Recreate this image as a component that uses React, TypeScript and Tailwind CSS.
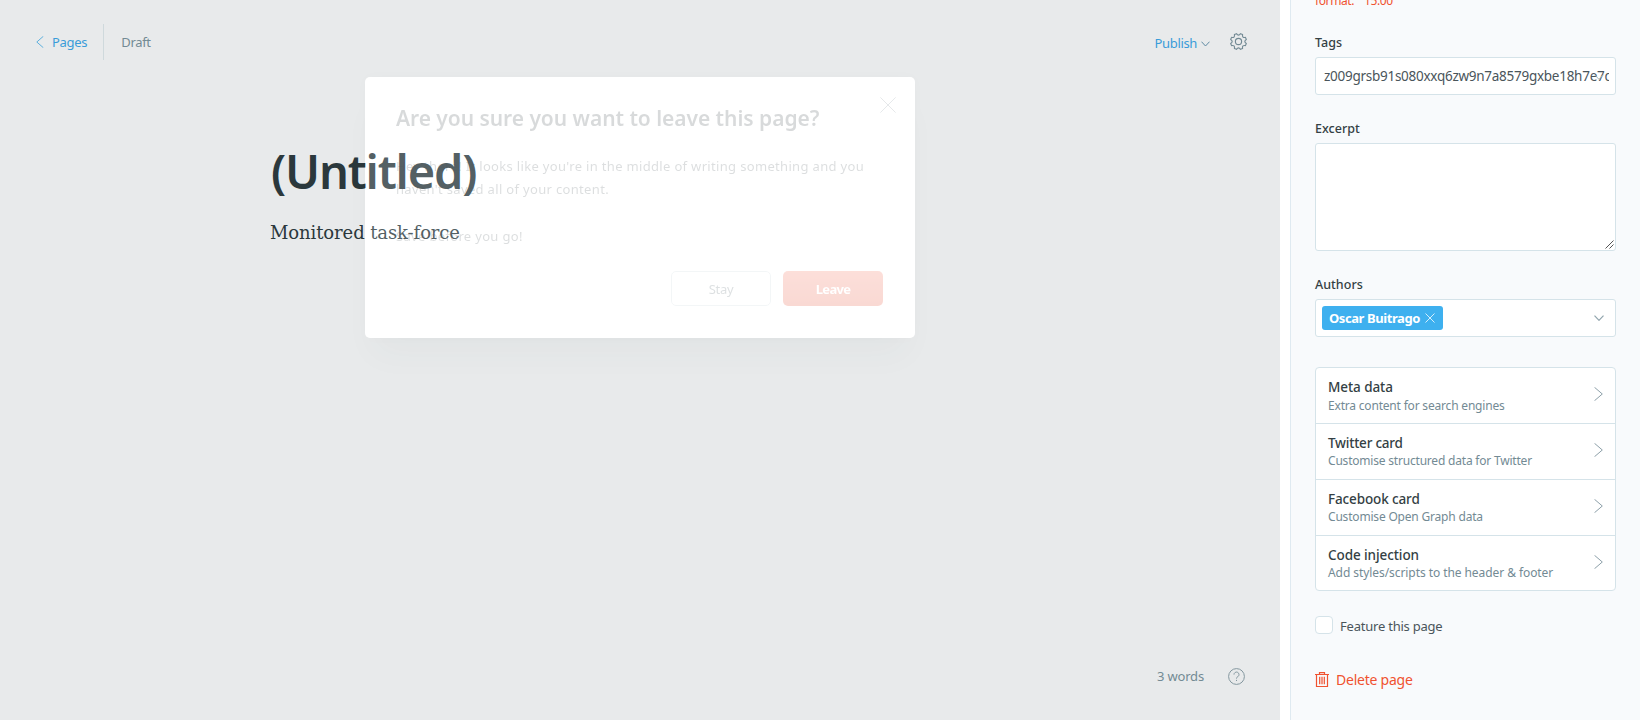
import type { ReactNode } from "react";

const point = (radius: number, degrees: number) => {
  const a = (degrees * Math.PI) / 180;
  return `${(12 + radius * Math.cos(a)).toFixed(2)} ${(12 + radius * Math.sin(a)).toFixed(2)}`;
};

const gearPath =
  Array.from({ length: 8 }, (_, i) => {
    const mid = i * 45 + 22.5;
    return `${i === 0 ? "M" : "L"}${point(11.4, mid - 8)}L${point(11.4, mid + 8)}Q${point(6.8, mid + 22.5)} ${point(11.4, mid + 37)}`;
  }).join("") + "Z";

function GearIcon() {
  return (
    <svg className="-mt-px size-[17px] text-[#738a94]" viewBox="0 0 24 24" fill="none" stroke="currentColor" strokeWidth="1.6" strokeLinejoin="round">
      <path d={gearPath} />
      <circle cx="12" cy="12" r="4.4" />
    </svg>
  );
}

function TrashIcon() {
  return (
    <svg className="-mt-[2px] h-[15px] w-[14px] shrink-0 text-[#f05230]" viewBox="0 0 14 15" fill="none" stroke="currentColor">
      <path d="M0 2.5h14M4.5 2.5v-1.8h5v1.8M1.5 2.5v12h11v-12M4.7 4.8v7.4M7 4.8v7.4M9.3 4.8v7.4" strokeWidth="1.2" />
    </svg>
  );
}

function Label({ children }: { children: ReactNode }) {
  return <div className="mb-1 h-5 text-[12.5px] leading-5 font-medium tracking-[0.02px] text-[#343f44]">{children}</div>;
}

function CardRow({ title, note, titleClass, noteClass }: { title: string; note: string; titleClass: string; noteClass: string }) {
  return (
    <div className="flex h-14 justify-between border-b border-[#d5e3e9] pt-[9px] pr-3 pl-3 whitespace-nowrap last:h-[54px] last:border-b-0">
      <div>
        <div className={`h-5 text-[13.5px] leading-5 font-medium text-[#343f44] ${titleClass}`}>{title}</div>
        <div className={`h-[18px] text-[12px] text-[#738a94] ${noteClass}`}>{note}</div>
      </div>
      <svg className="mt-[10px] h-[14px] w-[9px]" viewBox="0 0 9 14" fill="none" stroke="#8c9fa8">
        <path d="M.5.3 8.3 7 .5 13.7" />
      </svg>
    </div>
  );
}

function Editor() {
  return (
    <main className="flex h-full w-[1280px] shrink-0 flex-col bg-[#e8eaeb]">
      <header className="flex h-[84px] items-center justify-between pr-[33px] pl-9 text-[13px] leading-5">
        <div className="flex items-center">
          <svg className="h-3 w-2" viewBox="0 0 8 12" fill="none" stroke="#5fb0dd">
            <path d="M7.3.3.8 6l6.5 5.7" />
          </svg>
          <span className="ml-2 tracking-[-0.3px] text-[#3a9cd9]">Pages</span>
          <span className="ml-4 h-9 w-px bg-[#cfd9dc]" />
          <span className="ml-[17px] tracking-[-0.31px] text-[#738a94]">Draft</span>
        </div>
        <div className="flex items-center">
          <span className="mt-[2px] tracking-[-0.34px] text-[#3a9cd9]">Publish</span>
          <svg className="mt-[3px] ml-1 h-[6px] w-[9px]" viewBox="0 0 9 6" fill="none" stroke="#5f8ba3">
            <path d="M.5.7 4.5 5 8.5.7" />
          </svg>
          <span className="ml-5">
            <GearIcon />
          </span>
        </div>
      </header>
      <section className="flex-1 pt-[53px] pl-[271px]">
        <h1 className="h-[68px] text-[47px] leading-[69px] font-semibold tracking-[-1.2px] text-[#2b383c]">(Untitled)</h1>
        <p className="mt-[14px] -ml-px h-7 font-['DejaVu_Serif',serif] text-[18px] leading-7 tracking-[-0.1px] text-[#2b383c]">Monitored task-force</p>
      </section>
      <footer className="flex h-[88px] items-center justify-end pr-[35px]">
        <span className="text-[13px] leading-5 tracking-[-0.18px] text-[#738a94]">3 words</span>
        <svg className="ml-6 size-[17px]" viewBox="0 0 17 17" fill="none" stroke="#84979f">
          <circle cx="8.5" cy="8.5" r="7.9" />
          <path d="M6 6.6a2.5 2.5 0 1 1 3.8 2.1c-.9.5-1.3.9-1.3 1.9M8.5 11.9v1.1" />
        </svg>
      </footer>
    </main>
  );
}

function Settings() {
  return (
    <aside className="ml-[10px] flex h-full w-[350px] flex-col overflow-hidden border-l border-[#dfeaf1] bg-[#f8fafc] pr-6 pl-6">
      <p className="-mt-[9px] mb-[22px] h-5 shrink-0 text-[12px] leading-5 tracking-[-0.4px] whitespace-pre text-[#f05230]">{'format:  "15:00"'}</p>
      <Label>Tags</Label>
      <div className="relative mb-6 h-[38px] rounded-[3px] border border-[#d5e3e9] bg-white pr-[6px] pl-2">
        <div className="h-9 overflow-hidden text-[13.5px] leading-[37px] tracking-[-0.27px] whitespace-nowrap text-[#4a555b]">z009grsb91s080xxq6zw9n7a8579gxbe18h7e7d</div>
        <svg className="absolute top-4 right-[11px] h-[6px] w-[10px]" viewBox="0 0 10 6" fill="none" stroke="#a3b4bb">
          <path d="M.5.7 5 5.3 9.5.7" />
        </svg>
      </div>
      <Label>Excerpt</Label>
      <div className="mb-6 flex h-[108px] items-end justify-end rounded-[3px] border border-[#d5e3e9] bg-white p-px">
        <svg className="size-[9px]" viewBox="0 0 9 9" fill="none" stroke="#555">
          <path d="M.5 8.5l8-8M4.5 8.5l4-4" />
        </svg>
      </div>
      <Label>Authors</Label>
      <div className="mb-[30px] flex h-[38px] items-center justify-between rounded-[3px] border border-[#d5e3e9] bg-white pr-[11px] pl-[6px]">
        <span className="flex h-6 w-[121px] items-center rounded-[3px] bg-[#3eb0ef] pl-[7px] text-[13px] font-bold tracking-[-0.42px] whitespace-nowrap text-white">
          <span className="leading-6">Oscar Buitrago</span>
          <svg className="ml-[5px] size-[10px]" viewBox="0 0 10 10" fill="none" stroke="#d4eefc">
            <path d="M.5.5l9 9M9.5.5l-9 9" />
          </svg>
        </span>
        <svg className="h-[6px] w-[10px]" viewBox="0 0 10 6" fill="none" stroke="#8fa3ac" strokeWidth="1.2">
          <path d="M.5.7 5 5.3 9.5.7" />
        </svg>
      </div>
      <div className="mb-[25px] h-56 shrink-0 rounded-[4px] border border-[#d5e3e9] bg-white">
        <CardRow title="Meta data" note="Extra content for search engines" titleClass="tracking-[-0.08px]" noteClass="leading-[17px] tracking-[-0.19px]" />
        <CardRow title="Twitter card" note="Customise structured data for Twitter" titleClass="tracking-[-0.22px]" noteClass="leading-[15px] tracking-[-0.2px]" />
        <CardRow title="Facebook card" note="Customise Open Graph data" titleClass="tracking-[-0.13px]" noteClass="leading-[15px] tracking-[-0.19px]" />
        <CardRow title="Code injection" note="Add styles/scripts to the header & footer" titleClass="tracking-[-0.08px]" noteClass="leading-[15px] tracking-[-0.07px]" />
      </div>
      <div className="flex h-[18px] items-center">
        <span className="size-[18px] rounded-[4px] border border-[#d5e3e9] bg-white" />
        <span className="mt-px ml-[7px] text-[13px] leading-5 tracking-[-0.22px] text-[#4a555b]">Feature this page</span>
      </div>
      <div className="mt-9 flex h-5 items-center">
        <TrashIcon />
        <span className="ml-[7px] text-[14px] leading-5 tracking-[-0.24px] text-[#f05230]">Delete page</span>
      </div>
    </aside>
  );
}

function LeaveDialog() {
  return (
    <div className="absolute top-[77px] left-[365px] h-[261px] w-[550px] rounded-[5px] bg-white/18 shadow-[0_0_12px_rgba(60,90,90,0.02),0_24px_32px_-8px_rgba(60,90,90,0.035)] backdrop-brightness-110">
      <div className="flex h-full flex-col pt-[27px] pr-8 pb-8 pl-[31px] opacity-[0.19]">
        <svg className="absolute top-5 right-[19px] size-4" viewBox="0 0 16 16" fill="none" stroke="#7d8c93">
          <path d="M.4.4l15.2 15.2M15.6.4.4 15.6" />
        </svg>
        <h2 className="h-7 text-[21px] leading-[29px] font-semibold tracking-[-0.05px] whitespace-nowrap text-[#343f44]">Are you sure you want to leave this page?</h2>
        <p className="mt-[23px] h-[93px] text-[13px] leading-[23.3px] tracking-[0.33px] whitespace-nowrap text-[#4a555b]">
          Hey there! It looks like you're in the middle of writing something and you
          <br />
          haven't saved all of your content.
          <br />
          <br />
          Save before you go!
        </p>
        <div className="mt-[23px] flex justify-end gap-3 text-[13px]">
          <button className="h-[35px] w-[100px] rounded-[5px] border border-[#c5d2d8] pt-[2px] tracking-[-0.32px] text-[#4f6068]">Stay</button>
          <button className="h-[35px] w-[100px] rounded-[5px] bg-linear-to-b from-[#f5593d] to-[#e2391b] pt-[2px] font-bold tracking-[-0.7px] text-white">Leave</button>
        </div>
      </div>
    </div>
  );
}

export default function App() {
  return (
    <div className="relative flex h-[720px] w-[1640px] overflow-hidden bg-white font-['Noto_Sans',sans-serif]">
      <Editor />
      <Settings />
      <LeaveDialog />
    </div>
  );
}
